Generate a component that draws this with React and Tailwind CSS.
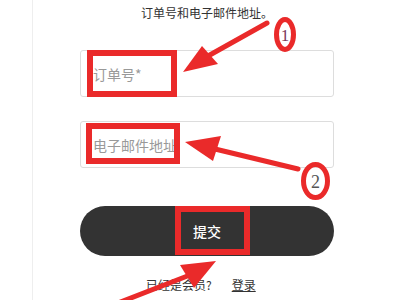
import React from 'react';

const cjk = { fontFamily: '"Noto Sans CJK SC", "Noto Sans", sans-serif' };

function Annotations() {
  const red = '#ea2a2a';
  return (
    <svg className="absolute inset-0 pointer-events-none" width="400" height="300" viewBox="0 0 400 300">
      {/* boxes */}
      <rect x="90" y="53" width="84" height="41" fill="none" stroke={red} strokeWidth="6" />
      <rect x="89" y="126" width="88" height="35" fill="none" stroke={red} strokeWidth="6" />
      <rect x="178" y="209" width="69" height="43" fill="none" stroke={red} strokeWidth="6" />

      {/* arrow 1 */}
      <line x1="267" y1="23" x2="208" y2="56" stroke={red} strokeWidth="5" strokeLinecap="round" />
      <polygon points="183,72 202,46 218,64" fill={red} />
      <ellipse cx="285" cy="34.5" rx="8.5" ry="15" fill="none" stroke={red} strokeWidth="5" />
      <text x="285" y="41" textAnchor="middle" fontSize="17" fill="#7b3a5c" fontFamily='"Liberation Serif", serif'>1</text>

      {/* arrow 2 */}
      <line x1="215" y1="149" x2="298" y2="169" stroke={red} strokeWidth="5" strokeLinecap="round" />
      <polygon points="185,142 221,136 213,161" fill={red} />
      <ellipse cx="315.5" cy="181" rx="12" ry="16.5" fill="none" stroke={red} strokeWidth="5" />
      <text x="315.5" y="188" textAnchor="middle" fontSize="18" fill="#555" fontFamily='"Liberation Serif", serif'>2</text>

      {/* arrow 3 */}
      <line x1="190" y1="275" x2="118" y2="303" stroke={red} strokeWidth="5" strokeLinecap="round" />
      <polygon points="216,261 180,265 194,288" fill={red} />
    </svg>
  );
}

export default function App() {
  return (
    <div className="relative w-[400px] h-[300px] overflow-hidden bg-white" style={cjk}>
      <div className="ml-[32px] h-full border-l border-[#eeeeee] pl-[47px]">
        <div className="w-[254px] flex flex-col">
          <p className="mt-[6px] text-center text-[12px] leading-[14px] text-[#333]">订单号和电子邮件地址。</p>

          <input
            readOnly
            placeholder="订单号*"
            className="mt-[30px] h-[47px] w-full rounded-[3px] border border-[#dddddd] bg-white px-[12px] text-[14px] outline-none placeholder:text-[#999]"
          />
          <input
            readOnly
            placeholder="电子邮件地址"
            className="mt-[24px] h-[47px] w-full rounded-[3px] border border-[#dddddd] bg-white px-[12px] text-[14px] outline-none placeholder:text-[#999]"
          />

          <button className="mt-[38px] h-[50px] w-full rounded-full bg-[#333333] text-[14px] font-medium text-white">
            提交
          </button>

          <div className="mt-[21px] flex items-center pl-[66px] text-[12px] leading-[16px] text-[#333]">
            <span>已经是会员?</span>
            <a className="ml-[20px] underline">登录</a>
          </div>
        </div>
      </div>
      <Annotations />
    </div>
  );
}
